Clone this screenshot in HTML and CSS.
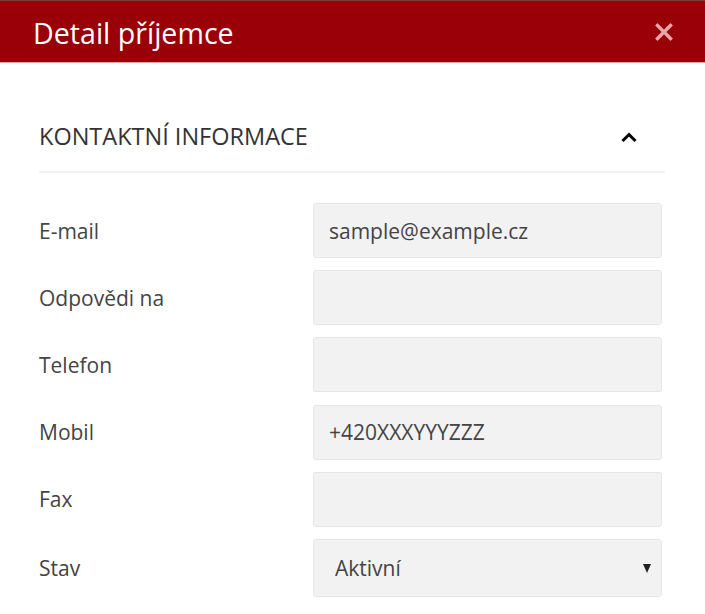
FILE: index.html
```html
<!DOCTYPE html>
<html lang="cs">
<head>
    <meta charset="UTF-8">
    <meta name="viewport" content="width=device-width, initial-scale=1.0">
    <title>Detail příjemce</title>
    <link rel="stylesheet" href="styles.css">
</head>
<body>
    <div class="modal">
        <header class="modal-header">
            <h1>Detail příjemce</h1>
            <button class="close" type="button" aria-label="Zavřít">
                <svg width="18" height="18" viewBox="0 0 18 18">
                    <path d="M2.5 2.5 L15.5 15.5 M15.5 2.5 L2.5 15.5" stroke="currentColor" stroke-width="3.4" stroke-linecap="square"/>
                </svg>
            </button>
        </header>

        <section class="section">
            <div class="section-head">
                <h2>Kontaktní informace</h2>
                <svg class="caret" width="18" height="12" viewBox="0 0 18 12">
                    <path d="M2.5 10 L9 3.5 L15.5 10" fill="none" stroke="currentColor" stroke-width="3"/>
                </svg>
            </div>

            <form class="fields">
                <label for="email">E-mail</label>
                <input type="text" id="email" value="sample@example.cz">

                <label for="reply">Odpovědi na</label>
                <input type="text" id="reply">

                <label for="phone">Telefon</label>
                <input type="text" id="phone">

                <label for="mobile">Mobil</label>
                <input type="text" id="mobile" value="+420XXXYYYZZZ">

                <label for="fax">Fax</label>
                <input type="text" id="fax">

                <label for="state">Stav</label>
                <div class="select-wrap">
                    <select id="state">
                        <option>Aktivní</option>
                        <option>Neaktivní</option>
                    </select>
                    <span class="select-arrow"></span>
                </div>
            </form>
        </section>
    </div>
</body>
</html>
```

FILE: styles.css
```css
body {
    margin: 0;
    font-family: "Open Sans", Arial, sans-serif;
    background: #fff;
    color: #333;
}

.modal-header {
    display: flex;
    align-items: center;
    justify-content: space-between;
    box-sizing: border-box;
    height: 63px;
    padding: 3px 32px 0 33px;
    background: #990008;
    border-top: 1px solid #7d3b3b;
    border-bottom: 1px solid #d9a9a9;
}

.modal-header h1 {
    margin: 0;
    font-size: 28.6px;
    line-height: 38px;
    font-weight: 400;
    color: #fff;
}

.close {
    display: flex;
    padding: 0;
    margin-top: -3px;
    border: none;
    background: none;
    color: #e6a7a9;
    cursor: pointer;
}

.section {
    padding: 0 40px 0 39px;
}

.section-head {
    display: flex;
    align-items: center;
    justify-content: space-between;
    padding: 57px 0 18px;
    border-bottom: 2px solid #f2f2f2;
}

.section-head h2 {
    margin: 0;
    font-size: 23.5px;
    line-height: 33px;
    font-weight: 400;
    text-transform: uppercase;
    color: #333;
}

.caret {
    margin-right: 27px;
    color: #000;
}

.fields {
    display: grid;
    grid-template-columns: 274px 349px;
    row-gap: 12.2px;
    align-items: center;
    padding-top: 30px;
}

label {
    font-size: 21px;
    color: #444;
}

input,
select {
    box-sizing: border-box;
    width: 100%;
    height: 55px;
    padding: 0 15px;
    border: 1px solid #e6e6e6;
    border-radius: 3px;
    background: #f2f2f2;
    font-family: inherit;
    font-size: 21px;
    color: #444;
    outline: none;
}

.select-wrap {
    position: relative;
}

select {
    height: 58px;
    padding: 0 21px;
    appearance: none;
    -webkit-appearance: none;
}

.select-arrow {
    position: absolute;
    right: 11px;
    top: 25px;
    width: 0;
    height: 0;
    border-left: 4.5px solid transparent;
    border-right: 4.5px solid transparent;
    border-top: 9px solid #222;
    pointer-events: none;
}
```
